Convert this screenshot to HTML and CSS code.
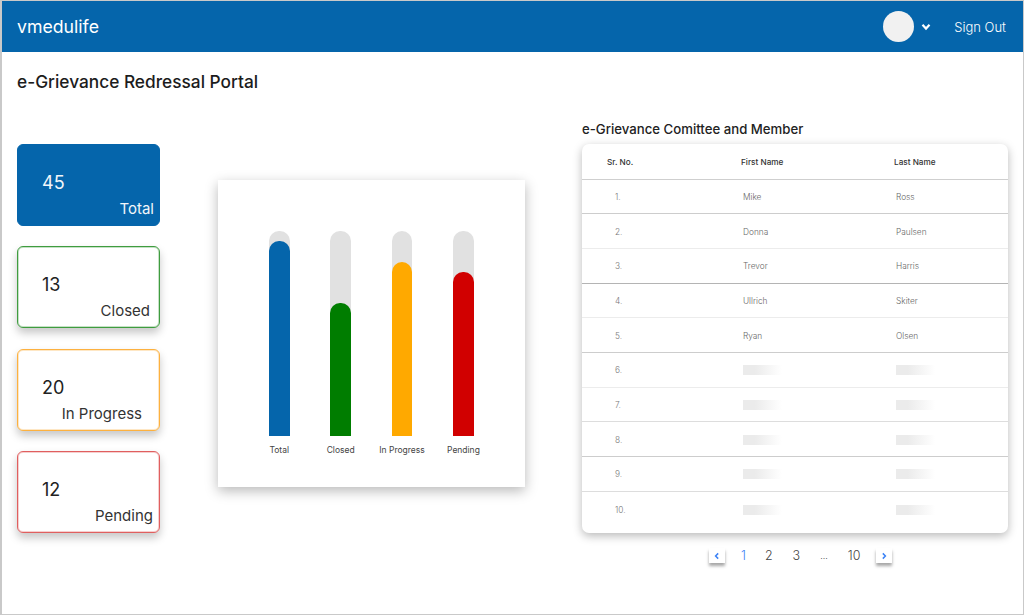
FILE: index.html
```html
<!DOCTYPE html>
<html lang="en">
<head>
<meta charset="utf-8">
<title>e-Grievance Redressal Portal</title>
<link rel="stylesheet" href="styles.css">
</head>
<body>
<div class="frame">
  <header class="topbar">
    <div class="brand">vmedulife</div>
    <div class="user">
      <div class="avatar"></div>
      <svg class="caret" viewBox="0 0 10 8" width="10" height="8"><path d="M1.5 1.8 5 5.6 8.5 1.8" fill="none" stroke="#fff" stroke-width="2.2"/></svg>
      <div class="signout">Sign Out</div>
    </div>
  </header>
  <main class="content">
    <h1 class="title">e-Grievance Redressal Portal</h1>
    <div class="columns">
      <section class="stats">
        <div class="stat stat-total"><div class="num">45</div><div class="lab lab-total">Total</div></div>
        <div class="stat stat-closed"><div class="num">13</div><div class="lab lab-closed">Closed</div></div>
        <div class="stat stat-progress"><div class="num">20</div><div class="lab lab-progress">In Progress</div></div>
        <div class="stat stat-pending"><div class="num">12</div><div class="lab lab-pending">Pending</div></div>
      </section>
      <section class="chart">
        <div class="bars">
          <div class="bar-col"><div class="track"><div class="fill fill-total"></div></div><div class="bar-label">Total</div></div>
          <div class="bar-col"><div class="track"><div class="fill fill-closed"></div></div><div class="bar-label">Closed</div></div>
          <div class="bar-col"><div class="track"><div class="fill fill-progress"></div></div><div class="bar-label">In Progress</div></div>
          <div class="bar-col"><div class="track"><div class="fill fill-pending"></div></div><div class="bar-label">Pending</div></div>
        </div>
      </section>
      <section class="members">
        <h2 class="subtitle">e-Grievance Comittee and Member</h2>
        <div class="table">
          <div class="row head"><div>Sr. No.</div><div>First Name</div><div>Last Name</div></div>
          <div class="row line-dark"><div class="sr">1.</div><div class="nm">Mike</div><div class="nm">Ross</div></div>
          <div class="row line-light"><div class="sr">2.</div><div class="nm">Donna</div><div class="nm">Paulsen</div></div>
          <div class="row line-darkest"><div class="sr">3.</div><div class="nm">Trevor</div><div class="nm">Harris</div></div>
          <div class="row line-light"><div class="sr">4.</div><div class="nm">Ullrich</div><div class="nm">Skiter</div></div>
          <div class="row line-dark"><div class="sr">5.</div><div class="nm">Ryan</div><div class="nm">Olsen</div></div>
          <div class="row line-light"><div class="sr">6.</div><div class="nm"><span class="skel"></span></div><div class="nm"><span class="skel"></span></div></div>
          <div class="row line-mid"><div class="sr">7.</div><div class="nm"><span class="skel"></span></div><div class="nm"><span class="skel"></span></div></div>
          <div class="row line-dark"><div class="sr">8.</div><div class="nm"><span class="skel"></span></div><div class="nm"><span class="skel"></span></div></div>
          <div class="row line-mid"><div class="sr">9.</div><div class="nm"><span class="skel"></span></div><div class="nm"><span class="skel"></span></div></div>
          <div class="row last"><div class="sr">10.</div><div class="nm"><span class="skel"></span></div><div class="nm"><span class="skel"></span></div></div>
        </div>
        <nav class="pager">
          <div class="pbtn"><svg viewBox="0 0 8 8" width="8" height="8"><path d="M5.2 1.4 2.6 4l2.6 2.6" fill="none" stroke="#3b82f6" stroke-width="1.5"/></svg></div>
          <span class="pg pg-1">1</span>
          <span class="pg pg-2">2</span>
          <span class="pg pg-3">3</span>
          <span class="pg pg-dots">...</span>
          <span class="pg pg-10">10</span>
          <div class="pbtn"><svg viewBox="0 0 8 8" width="8" height="8"><path d="M2.8 1.4 5.4 4 2.8 6.6" fill="none" stroke="#3b82f6" stroke-width="1.5"/></svg></div>
        </nav>
      </section>
    </div>
  </main>
</div>
</body>
</html>
```

FILE: styles.css
```css
* { box-sizing: border-box; }
html, body { margin: 0; padding: 0; }
body { font-family: "Inter", "Noto Sans", sans-serif; color: #222; background: #fff; }

.frame {
  width: 1024px;
  height: 615px;
  border: 1px solid #c9c9c9;
  border-left-width: 2px;
  overflow: hidden;
  background: #fff;
}

.topbar {
  height: 51px;
  background: #0565ab;
  display: flex;
  align-items: center;
  justify-content: space-between;
  padding: 0 17px 0 15px;
  color: #fff;
}
.brand { font-size: 17.7px; font-weight: 400; }
.user { display: flex; align-items: center; }
.avatar { width: 31px; height: 31px; border-radius: 50%; background: #f1f1f1; }
.caret { margin-left: 7px; }
.signout { margin-left: 23px; font-size: 13px; font-weight: 300; }

.content { padding: 20px 15px 0 15px; }
.title { margin: 0; font-size: 17.3px; line-height: 20px; font-weight: 500; color: #1c1c1c; }

.columns { display: flex; align-items: flex-start; margin-top: 29px; }

.stats { width: 143px; margin-top: 23px; display: flex; flex-direction: column; gap: 20.33px; }
.stat {
  height: 82px;
  border-radius: 6px;
  border: 1px solid;
  background: #fff;
  padding: 26px 0 0 24px;
  display: flex;
  flex-direction: column;
}
.num { font-size: 18px; line-height: 24px; color: #222; }
.lab { font-size: 15px; line-height: 20px; margin-top: 4px; align-self: flex-end; color: #333; font-weight: 400; }
.stat-total { background: #0565ab; border-color: #0565ab; }
.stat-total .num, .stat-total .lab { color: #f2f6fa; }
.stat-closed { border-color: #3f9c3f; box-shadow: inset 0 0 0 1px rgba(63,156,63,.3), 0 5px 8px rgba(0,0,0,.22); }
.stat-progress { border-color: #fdb13f; box-shadow: inset 0 0 0 1px rgba(253,177,63,.3), 0 5px 8px rgba(0,0,0,.22); }
.stat-pending { border-color: #e05f5f; box-shadow: inset 0 0 0 1px rgba(224,95,95,.3), 0 5px 8px rgba(0,0,0,.22); }
.lab-total { margin-right: 5px; }
.lab-closed { margin-right: 9px; }
.lab-progress { margin-right: 17px; }
.lab-pending { margin-right: 6px; }

.chart {
  width: 307px;
  height: 307px;
  margin: 59px 0 0 58px;
  background: #fff;
  box-shadow: 0 4px 12px rgba(0,0,0,.28);
  padding: 51px 0 0 51px;
}
.bars { display: flex; gap: 40.9px; }
.bar-col { width: 20.5px; display: flex; flex-direction: column; align-items: center; }
.track {
  position: relative;
  width: 20.5px;
  height: 205px;
  background: #e1e1e1;
  border-radius: 10px 10px 0 0;
  display: flex;
  flex-direction: column;
  justify-content: flex-end;
}
.fill { width: 100%; border-radius: 10px 10px 0 0; }
.fill-total { height: 195px; background: #0565ab; }
.fill-closed { height: 133px; background: #007d00; }
.fill-progress { height: 174px; background: #ffa900; }
.fill-pending { height: 164px; background: #d10000; }
.bar-label { margin-top: 8px; font-size: 8.5px; line-height: 13px; color: #444; white-space: nowrap; }

.members { width: 426px; margin: 0 0 0 57px; }
.subtitle { margin: 0 0 7px; font-size: 13.2px; line-height: 16px; font-weight: 500; color: #222; }
.table { height: 389px; background: #fff; border-radius: 7px; box-shadow: 0 3px 10px rgba(0,0,0,.28); }
.row {
  display: grid;
  grid-template-columns: 159px 153px 1fr;
  height: 34.7px;
  padding-top: 1px;
  align-items: center;
  border-bottom: 1px solid #dcdcdc;
  font-size: 8.3px;
  color: #666;
  font-weight: 300;
}
.row.head { height: 35.5px; font-size: 8.2px; color: #333; font-weight: 500; border-bottom-color: #cfcfcf; }
.row.head > div:first-child { padding-left: 25px; }
.row.line-light { border-bottom-color: #ececec; }
.row.line-mid { border-bottom-color: #dddddd; }
.row.line-dark { border-bottom-color: #cdcdcd; }
.row.line-darkest { border-bottom-color: #b4b4b4; }
.row.last { border-bottom: 0; }
.sr { padding-left: 33px; color: #777; }
.nm { padding-left: 2px; }
.skel {
  display: block;
  width: 39px;
  height: 10px;
  background: linear-gradient(to right, #ebebeb 30%, #fff 100%);
}

.pager { display: flex; align-items: center; margin: 14px 0 0 127px; height: 17px; }
.pbtn {
  width: 16px;
  height: 15px;
  background: #fff;
  box-shadow: 0 3px 3px rgba(0,0,0,.35);
  display: flex;
  align-items: center;
  justify-content: center;
}
.pg { font-size: 12.5px; line-height: 17px; color: #444; font-weight: 300; }
.pg-1 { color: #3b82f6; margin-left: 16px; }
.pg-2 { margin-left: 19px; }
.pg-3 { margin-left: 20px; }
.pg-dots { margin-left: 20px; font-size: 9px; }
.pg-10 { margin-left: 20px; margin-right: 16px; }
```
